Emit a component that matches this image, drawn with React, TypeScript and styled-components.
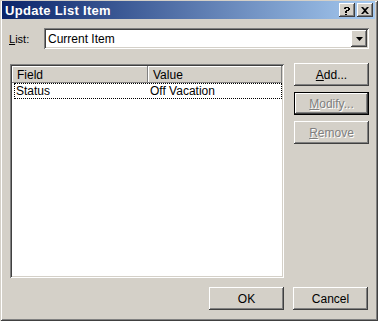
import React from "react";
import styled, {createGlobalStyle, css} from "styled-components";

const GlobalStyle = createGlobalStyle`
  html, body {
    margin: 0;
    padding: 0;
    background: #D4D0C8;
  }
  * {
    box-sizing: border-box;
  }
`

const raised = css`
  background: #D4D0C8;
  box-shadow: inset -1px -1px #404040, inset 1px 1px #FFFFFF, inset -2px -2px #808080, inset 2px 2px #D4D0C8;
`

const sunken = css`
  box-shadow: inset 1px 1px #808080, inset -1px -1px #FFFFFF, inset 2px 2px #404040, inset -2px -2px #D4D0C8;
`

const Window = styled.div`
  width: 378px;
  height: 321px;
  padding: 1px 3px 3px 2px;
  display: flex;
  flex-direction: column;
  background: #D4D0C8;
  font-family: "Liberation Sans", Arial, sans-serif;
  font-size: 11px;
  color: #000;
  box-shadow: inset 1px 1px #D4D0C8, inset -1px -1px #404040, inset 2px 2px #FFFFFF, inset -2px -2px #808080;
`

const TitleBar = styled.div`
  height: 20px;
  display: flex;
  align-items: center;
  padding: 0 2px 0 3px;
  background: linear-gradient(to right, #0A246A, #A6CAF0);
`

const Title = styled.div`
  flex: 1;
  color: #FFFFFF;
  font-weight: bold;
  font-size: 13px;
  letter-spacing: 0.3px;
`

const TitleButton = styled.div`
  ${raised};
  width: 16px;
  height: 14px;
  display: flex;
  align-items: center;
  justify-content: center;
  margin-left: ${(p: { $gap?: number }) => p.$gap ?? 0}px;
`

const Body = styled.div`
  flex: 1;
  display: flex;
  flex-direction: column;
  padding: 9px 6px 8px 6px;
`

const ListRow = styled.div`
  display: flex;
  align-items: center;
  height: 21px;
`

const Label = styled.label`
  width: 36px;
  padding-left: 1px;
`

const Combo = styled.div`
  ${sunken};
  background: #FFFFFF;
  width: 325px;
  height: 21px;
  padding: 2px;
  display: flex;
  align-items: center;
`

const ComboText = styled.div`
  flex: 1;
  padding-left: 2px;
  font-size: 12px;
`

const ComboButton = styled.div`
  ${raised};
  width: 16px;
  height: 17px;
  display: flex;
  align-items: center;
  justify-content: center;
`

const Main = styled.div`
  display: flex;
  gap: 10px;
  margin-top: 15px;
  padding-left: 2px;
`

const ListView = styled.div`
  ${sunken};
  background: #FFFFFF;
  width: 274px;
  height: 214px;
  padding: 2px;
  display: flex;
  flex-direction: column;
`

const HeaderRow = styled.div`
  display: flex;
  height: 17px;
`

const HeaderCell = styled.div<{ $width?: number }>`
  ${raised};
  box-shadow: inset -1px -1px #808080, inset 1px 1px #FFFFFF;
  width: ${(p) => (p.$width ? `${p.$width}px` : "auto")};
  flex: ${(p) => (p.$width ? "none" : 1)};
  padding: 2px 0 0 5px;
  font-size: 12px;
`

const ItemRow = styled.div`
  display: flex;
  height: 16px;
  margin: 0 0 0 2px;
  outline: 1px dotted #000;
  outline-offset: -1px;
  align-items: center;
  font-size: 12px;
`

const ItemCell = styled.div<{ $width?: number }>`
  width: ${(p) => (p.$width ? `${p.$width}px` : "auto")};
  flex: ${(p) => (p.$width ? "none" : 1)};
  padding-left: 2px;
`

const ButtonColumn = styled.div`
  display: flex;
  flex-direction: column;
  gap: 6px;
  margin-top: -1px;
`

const Button = styled.div<{ $default?: boolean; $disabled?: boolean }>`
  ${raised};
  width: 75px;
  height: 23px;
  display: flex;
  align-items: center;
  justify-content: center;
  font-size: 12px;
  color: ${(p) => (p.$disabled ? "#808080" : "#000")};
  text-shadow: ${(p) => (p.$disabled ? "1px 1px #FFFFFF" : "none")};
  ${(p) => p.$default && css`
    box-shadow: inset 1px 1px #000, inset -1px -1px #000, inset -2px -2px #404040, inset 2px 2px #FFFFFF, inset -3px -3px #808080;
  `}
`

const Footer = styled.div`
  display: flex;
  justify-content: flex-end;
  gap: 9px;
  margin-top: 9px;
  padding-right: 1px;
`

const U = styled.span`
  text-decoration: underline;
`

export default function App() {
    return (
        <>
            <GlobalStyle/>
            <Window>
                <TitleBar>
                    <Title>Update List Item</Title>
                    <TitleButton>
                        <svg width="8" height="9" viewBox="0 0 8 9">
                            <path d="M1 1h5v1h1v2h-1v1h-2v2h-2v-2h1v-1h2v-2h-2v1h-2v-1h1z" fill="#000"/>
                            <rect x="2" y="8" width="2" height="1" fill="#000"/>
                        </svg>
                    </TitleButton>
                    <TitleButton $gap={2}>
                        <svg width="8" height="7" viewBox="0 0 8 7">
                            <path d="M0 0h2l2 2 2-2h2l-3 3.5 3 3.5h-2l-2-2-2 2h-2l3-3.5z" fill="#000"/>
                        </svg>
                    </TitleButton>
                </TitleBar>
                <Body>
                    <ListRow>
                        <Label><U>L</U>ist:</Label>
                        <Combo>
                            <ComboText>Current Item</ComboText>
                            <ComboButton>
                                <svg width="7" height="4" viewBox="0 0 7 4">
                                    <path d="M0 0h7l-3.5 4z" fill="#000"/>
                                </svg>
                            </ComboButton>
                        </Combo>
                    </ListRow>
                    <Main>
                        <ListView>
                            <HeaderRow>
                                <HeaderCell $width={136}>Field</HeaderCell>
                                <HeaderCell>Value</HeaderCell>
                            </HeaderRow>
                            <ItemRow>
                                <ItemCell $width={134}>Status</ItemCell>
                                <ItemCell>Off Vacation</ItemCell>
                            </ItemRow>
                        </ListView>
                        <ButtonColumn>
                            <Button><U>A</U>dd...</Button>
                            <Button $default $disabled><U>M</U>odify...</Button>
                            <Button $disabled><U>R</U>emove</Button>
                        </ButtonColumn>
                    </Main>
                    <Footer>
                        <Button>OK</Button>
                        <Button>Cancel</Button>
                    </Footer>
                </Body>
            </Window>
        </>
    );
}
